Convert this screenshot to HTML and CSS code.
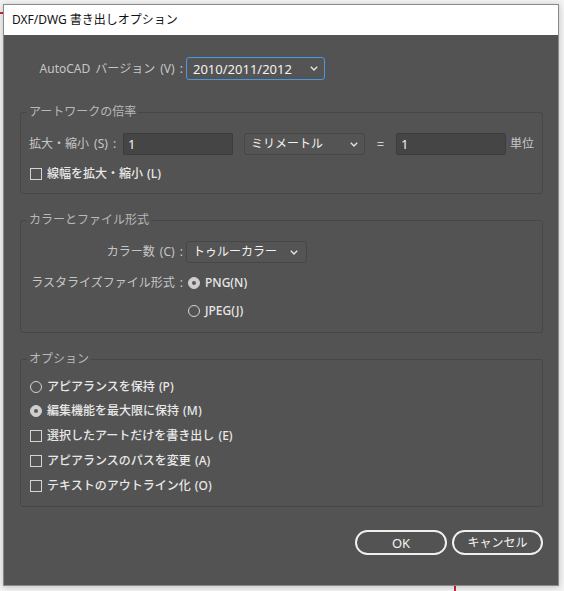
FILE: index.html
```html
<!DOCTYPE html>
<html lang="ja">
<head>
<meta charset="utf-8">
<title>DXF/DWG 書き出しオプション</title>
<link rel="stylesheet" href="styles.css">
</head>
<body>
<div class="art-line art-line-top"></div>
<div class="art-line art-line-bottom"></div>
<div class="window">
  <div class="titlebar">DXF/DWG 書き出しオプション</div>
  <div class="panel">
    <div class="row version-row">
      <span class="label label-version">AutoCAD バージョン (V) :</span>
      <div class="select select-focus select-version">
        <span class="select-text num">2010/2011/2012</span>
        <svg class="chev" width="8" height="5" viewBox="0 0 8 5"><path d="M0.8 0.8 L4 4 L7.2 0.8" fill="none" stroke="#e4e4e4" stroke-width="1.4"/></svg>
      </div>
    </div>

    <fieldset class="group group-scale">
      <legend class="legend">アートワークの倍率</legend>
      <div class="row scale-row">
        <span class="label label-scale">拡大・縮小 (S) :</span>
        <div class="input input-scale"><span class="num">1</span></div>
        <div class="select select-unit">
          <span class="select-text">ミリメートル</span>
          <svg class="chev" width="8" height="5" viewBox="0 0 8 5"><path d="M0.8 0.8 L4 4 L7.2 0.8" fill="none" stroke="#e4e4e4" stroke-width="1.4"/></svg>
        </div>
        <span class="equals">=</span>
        <div class="input input-scale"><span class="num">1</span></div>
        <span class="unit">単位</span>
      </div>
      <div class="row opt-row check-gap-1">
        <span class="checkbox"></span>
        <span class="opt">線幅を拡大・縮小 (L)</span>
      </div>
    </fieldset>

    <fieldset class="group group-color">
      <legend class="legend">カラーとファイル形式</legend>
      <div class="row">
        <span class="label col-label">カラー数 (C) :</span>
        <div class="select select-colors">
          <span class="select-text">トゥルーカラー</span>
          <svg class="chev" width="8" height="5" viewBox="0 0 8 5"><path d="M0.8 0.8 L4 4 L7.2 0.8" fill="none" stroke="#e4e4e4" stroke-width="1.4"/></svg>
        </div>
      </div>
      <div class="row raster-row">
        <span class="label col-label">ラスタライズファイル形式 :</span>
        <div class="choice">
          <span class="radio radio-on"></span>
          <span class="opt">PNG(N)</span>
        </div>
      </div>
      <div class="row jpeg-row">
        <span class="col-label"></span>
        <div class="choice">
          <span class="radio"></span>
          <span class="opt">JPEG(J)</span>
        </div>
      </div>
    </fieldset>

    <fieldset class="group group-options">
      <legend class="legend">オプション</legend>
      <div class="row opt-row">
        <span class="radio"></span>
        <span class="opt">アピアランスを保持 (P)</span>
      </div>
      <div class="row opt-row gap-2">
        <span class="radio radio-on"></span>
        <span class="opt">編集機能を最大限に保持 (M)</span>
      </div>
      <div class="row opt-row gap-3">
        <span class="checkbox"></span>
        <span class="opt">選択したアートだけを書き出し (E)</span>
      </div>
      <div class="row opt-row gap-3">
        <span class="checkbox"></span>
        <span class="opt">アピアランスのパスを変更 (A)</span>
      </div>
      <div class="row opt-row gap-3">
        <span class="checkbox"></span>
        <span class="opt">テキストのアウトライン化 (O)</span>
      </div>
    </fieldset>

    <div class="buttons">
      <button class="btn btn-ok">OK</button>
      <button class="btn btn-cancel">キャンセル</button>
    </div>
  </div>
</div>
</body>
</html>
```

FILE: styles.css
```css
* { box-sizing: border-box; }

html, body {
  margin: 0;
  padding: 0;
}

body {
  width: 564px;
  height: 591px;
  background: #f3f3f3;
  font-family: "Noto Sans", "Noto Sans CJK JP", sans-serif;
  font-size: 12px;
  line-height: 16px;
  color: #c8c8c8;
  position: relative;
  overflow: hidden;
}

.art-line {
  position: absolute;
  background: #d2232a;
}
.art-line-top {
  left: 0;
  top: 12px;
  width: 4px;
  height: 2px;
}
.art-line-bottom {
  left: 454px;
  top: 584px;
  width: 2px;
  height: 7px;
}

.window {
  position: relative;
  margin: 4px 0 0 3px;
  width: 556px;
  height: 582px;
  border: 1px solid #8a8a8a;
  box-shadow: 0 1px 6px rgba(0, 0, 0, 0.22);
  display: flex;
  flex-direction: column;
}

.titlebar {
  height: 30px;
  flex: none;
  background: #ffffff;
  color: #111111;
  padding-left: 8px;
  display: flex;
  align-items: center;
  font-size: 12px;
}

.panel {
  flex: 1;
  background: #535353;
  padding: 22px 15px 0 16px;
}

.row {
  display: flex;
  align-items: center;
  height: 22px;
}

.version-row {
  height: 23px;
}

.label {
  color: #c6c6c6;
  white-space: nowrap;
  word-spacing: 2px;
}

.label-version {
  width: 163px;
  text-align: right;
  margin-right: 3px;
  word-spacing: 2px;
}

.num {
  font-size: 13px;
}

.select {
  display: flex;
  align-items: center;
  justify-content: space-between;
  height: 22px;
  border: 1px solid #474747;
  border-radius: 3px;
  background: #545454;
  color: #f2f2f2;
  padding: 0 6px 0 6px;
}

.select-text {
  white-space: nowrap;
}

.chev {
  display: block;
  flex: none;
}

.select-focus {
  border-color: #4a97e4;
  height: 23px;
}

.select-version {
  width: 139px;
}

.group {
  margin: 0;
  border: 1px solid #474747;
  border-radius: 3px;
  padding: 0 8px 0 8px;
  min-width: 0;
}

.legend {
  padding: 0 2px;
  margin-left: -2px;
  line-height: 16px;
  color: #b8b8b8;
}

.group-scale {
  margin-top: 24px;
  padding-top: 13px;
  padding-bottom: 8px;
}

.label-scale {
  width: 91px;
  margin-right: 3px;
}

.input {
  height: 22px;
  width: 110px;
  background: #454545;
  border: 1px solid #3d3d3d;
  border-radius: 2px;
  color: #f2f2f2;
  padding-left: 4px;
  display: flex;
  align-items: center;
}

.select-unit {
  width: 121px;
  margin-left: 11px;
  padding-right: 6px;
}

.equals {
  width: 31px;
  text-align: center;
  color: #d0d0d0;
  font-size: 13px;
}

.unit {
  margin-left: 4px;
  color: #c8c8c8;
}

.check-gap-1 {
  margin-top: 8px;
}

.opt-row {
  padding-left: 1px;
}

.checkbox {
  width: 12px;
  height: 12px;
  border: 1px solid #d4d4d4;
  flex: none;
  margin-right: 5px;
}

.radio {
  width: 12px;
  height: 12px;
  border: 1px solid #d4d4d4;
  border-radius: 50%;
  flex: none;
  margin-right: 5px;
}

.radio-on {
  background: #cfcfcf;
  border-color: #cfcfcf;
  position: relative;
}
.radio-on::after {
  content: "";
  position: absolute;
  left: 3px;
  top: 3px;
  width: 4px;
  height: 4px;
  border-radius: 50%;
  background: #5a5a5a;
}

.opt {
  color: #e8e8e8;
  white-space: nowrap;
  font-weight: 500;
  word-spacing: 1px;
}

.group-color {
  margin-top: 18px;
  padding-top: 13px;
  padding-bottom: 10px;
}

.col-label {
  width: 154px;
  text-align: right;
  margin-right: 3px;
  flex: none;
}

.select-colors {
  width: 121px;
  padding-right: 8px;
}

.choice {
  display: flex;
  align-items: center;
  margin-left: 2px;
}

.raster-row {
  margin-top: 9px;
}

.jpeg-row {
  margin-top: 6px;
}

.group-options {
  margin-top: 18px;
  padding-top: 9px;
  padding-bottom: 9px;
}

.gap-2 {
  margin-top: 2px;
}

.gap-3 {
  margin-top: 3px;
}

.buttons {
  margin-top: 23px;
  display: flex;
  justify-content: flex-end;
  gap: 5px;
}

.btn {
  height: 25px;
  border: 2px solid #f0f0f0;
  border-radius: 13px;
  background: transparent;
  color: #f4f4f4;
  font-family: "Noto Sans", "Noto Sans CJK JP", sans-serif;
  font-size: 12px;
  line-height: 16px;
  padding: 0;
}

.btn-ok {
  width: 92px;
  font-size: 13px;
}

.btn-cancel {
  width: 91px;
}
```
